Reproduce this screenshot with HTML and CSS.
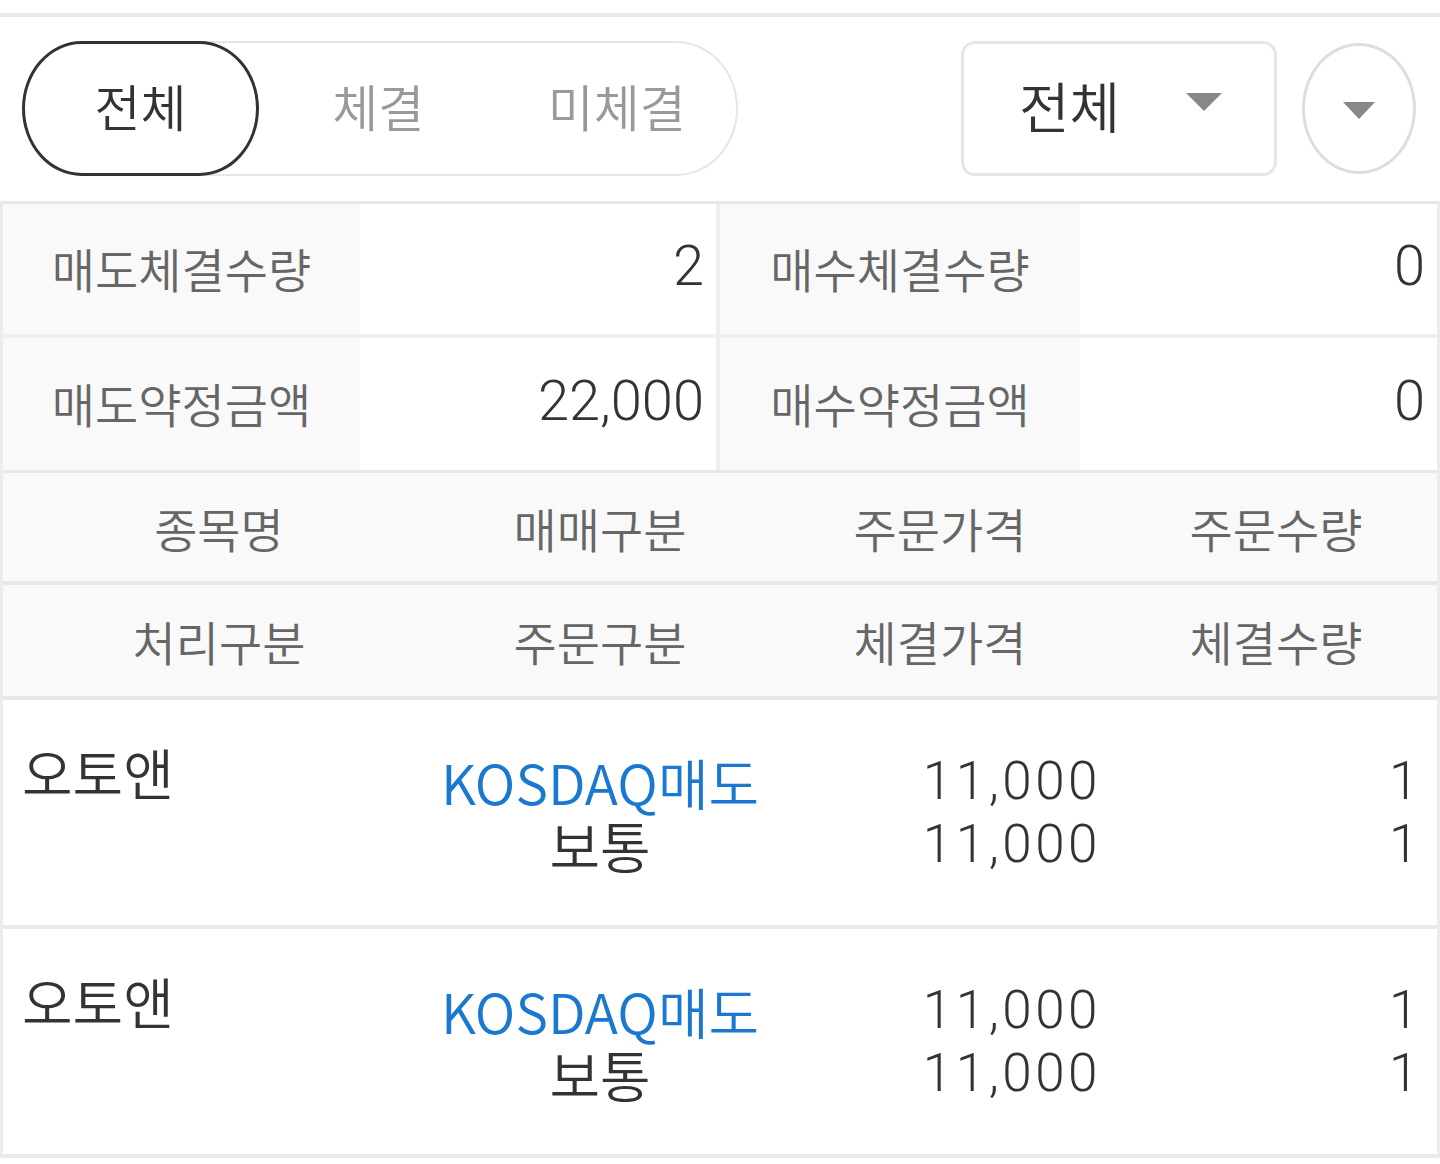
FILE: index.html
```html
<!DOCTYPE html>
<html lang="ko">

<head>
    <meta charset="UTF-8">
    <meta name="viewport" content="width=device-width, initial-scale=1.0">
    <title>주문체결내역</title>
    <link rel="stylesheet" href="styles.css">
</head>

<body>
    <div class="top-line"></div>

    <div class="toolbar">
        <div class="segment">
            <button class="seg-item active">전체</button>
            <button class="seg-item">체결</button>
            <button class="seg-item">미체결</button>
        </div>

        <div class="toolbar-right">
            <div class="select">
                <span class="select-text">전체</span>
                <span class="caret"></span>
            </div>
            <button class="round-btn"><span class="caret small"></span></button>
        </div>
    </div>

    <div class="summary">
        <div class="sum-row first">
            <div class="sum-label">매도체결수량</div>
            <div class="sum-value">2</div>
            <div class="sum-label divider">매수체결수량</div>
            <div class="sum-value">0</div>
        </div>
        <div class="sum-row second">
            <div class="sum-label">매도약정금액</div>
            <div class="sum-value">22,000</div>
            <div class="sum-label divider">매수약정금액</div>
            <div class="sum-value">0</div>
        </div>
    </div>

    <div class="list">
        <div class="head-row first">
            <div>종목명</div>
            <div>매매구분</div>
            <div>주문가격</div>
            <div>주문수량</div>
        </div>
        <div class="head-row second">
            <div>처리구분</div>
            <div>주문구분</div>
            <div>체결가격</div>
            <div>체결수량</div>
        </div>

        <div class="order-row">
            <div class="cell name">오토앤</div>
            <div class="cell kind">
                <span class="market">KOSDAQ매도</span>
                <span>보통</span>
            </div>
            <div class="cell num price">
                <span>11,000</span>
                <span>11,000</span>
            </div>
            <div class="cell num qty">
                <span>1</span>
                <span>1</span>
            </div>
        </div>

        <div class="order-row">
            <div class="cell name">오토앤</div>
            <div class="cell kind">
                <span class="market">KOSDAQ매도</span>
                <span>보통</span>
            </div>
            <div class="cell num price">
                <span>11,000</span>
                <span>11,000</span>
            </div>
            <div class="cell num qty">
                <span>1</span>
                <span>1</span>
            </div>
        </div>
    </div>
</body>

</html>
```

FILE: styles.css
```css
body {
    margin: 0;
    background-color: #fff;
    font-family: "Noto Sans CJK KR", "Noto Sans", sans-serif;
    font-weight: 350;
    color: #333;
}

.top-line {
    margin-top: 13px;
    height: 4px;
    background-color: #e8e8e8;
}

.toolbar {
    height: 184px;
    box-sizing: border-box;
    padding: 24px 24px 0 22px;
    display: flex;
    justify-content: space-between;
    align-items: flex-start;
}

.segment {
    width: 716px;
    height: 135px;
    box-sizing: border-box;
    border: 2px solid #e6e6e6;
    border-radius: 62px / 68px;
    display: flex;
}

.seg-item {
    flex: 1;
    background: none;
    border: none;
    font-family: inherit;
    font-weight: 350;
    font-size: 50px;
    color: #999;
    padding: 0 0 8px;
    cursor: pointer;
}

.seg-item.active {
    flex: 0 0 237px;
    margin: -2px 0 -2px -2px;
    border: 3px solid #333;
    border-radius: 60px / 68px;
    color: #333;
}

.toolbar-right {
    display: flex;
    gap: 25px;
}

.select {
    width: 316px;
    height: 135px;
    box-sizing: border-box;
    border: 3px solid #e6e6e6;
    border-radius: 14px;
    padding: 0 52px 10px 55px;
    display: flex;
    align-items: center;
    justify-content: space-between;
}

.select-text {
    font-size: 55px;
    color: #333;
}

.caret {
    width: 0;
    height: 0;
    border-left: 18px solid transparent;
    border-right: 18px solid transparent;
    border-top: 18px solid #888;
    margin-top: -4px;
}

.caret.small {
    border-left-width: 16px;
    border-right-width: 16px;
    border-top-width: 17px;
    margin-top: 4px;
}

.round-btn {
    width: 114px;
    height: 131px;
    margin-top: 2px;
    border: 3px solid #ddd;
    border-radius: 50%;
    background: #fff;
    display: flex;
    align-items: center;
    justify-content: center;
    padding: 0;
}

.summary {
    border-top: 3px solid #e8e8e8;
    border-left: 3px solid #ececec;
    border-right: 3px solid #ececec;
}

.sum-row {
    display: grid;
    grid-template-columns: 357px 356px 364px 357px;
}

.sum-row.first {
    height: 130px;
    border-bottom: 4px solid #f0f0f0;
}

.sum-row.second {
    height: 132px;
    border-bottom: 3px solid #e8e8e8;
}

.sum-label {
    background-color: #f9f9f9;
    color: #666;
    font-size: 47px;
    padding-bottom: 4px;
    display: flex;
    align-items: center;
    justify-content: center;
}

.sum-label.divider {
    border-left: 4px solid #eee;
}

.sum-value {
    font-family: Roboto, "Noto Sans CJK KR", sans-serif;
    font-weight: 300;
    font-size: 56px;
    display: flex;
    align-items: center;
    justify-content: flex-end;
    padding-right: 12px;
    padding-bottom: 6px;
}

.list {
    border-left: 3px solid #ececec;
    border-right: 3px solid #ececec;
}

.head-row {
    display: grid;
    grid-template-columns: 432px 330px 350px 322px;
    background-color: #f9f9f9;
    border-bottom: 4px solid #e8e8e8;
    color: #666;
    font-size: 47px;
    align-items: center;
    text-align: center;
}

.head-row.first {
    height: 108px;
}

.head-row.second {
    height: 111px;
}

.order-row {
    display: grid;
    grid-template-columns: 432px 330px 350px 322px;
    height: 225px;
    border-bottom: 4px solid #ebebeb;
    align-items: center;
    font-size: 55px;
    line-height: 63px;
    color: #333;
}

.cell {
    display: flex;
    flex-direction: column;
}

.cell.name {
    padding-left: 19px;
    margin-bottom: 82px;
}

.cell.kind {
    align-items: center;
    white-space: nowrap;
}

.market {
    color: #1a78d0;
}

.cell.num {
    align-items: flex-end;
    font-family: Roboto, "Noto Sans CJK KR", sans-serif;
    font-weight: 300;
    font-size: 53px;
    letter-spacing: 3.5px;
}

.cell.price {
    padding-right: 14px;
}

.cell.qty {
    padding-right: 15px;
}
```
